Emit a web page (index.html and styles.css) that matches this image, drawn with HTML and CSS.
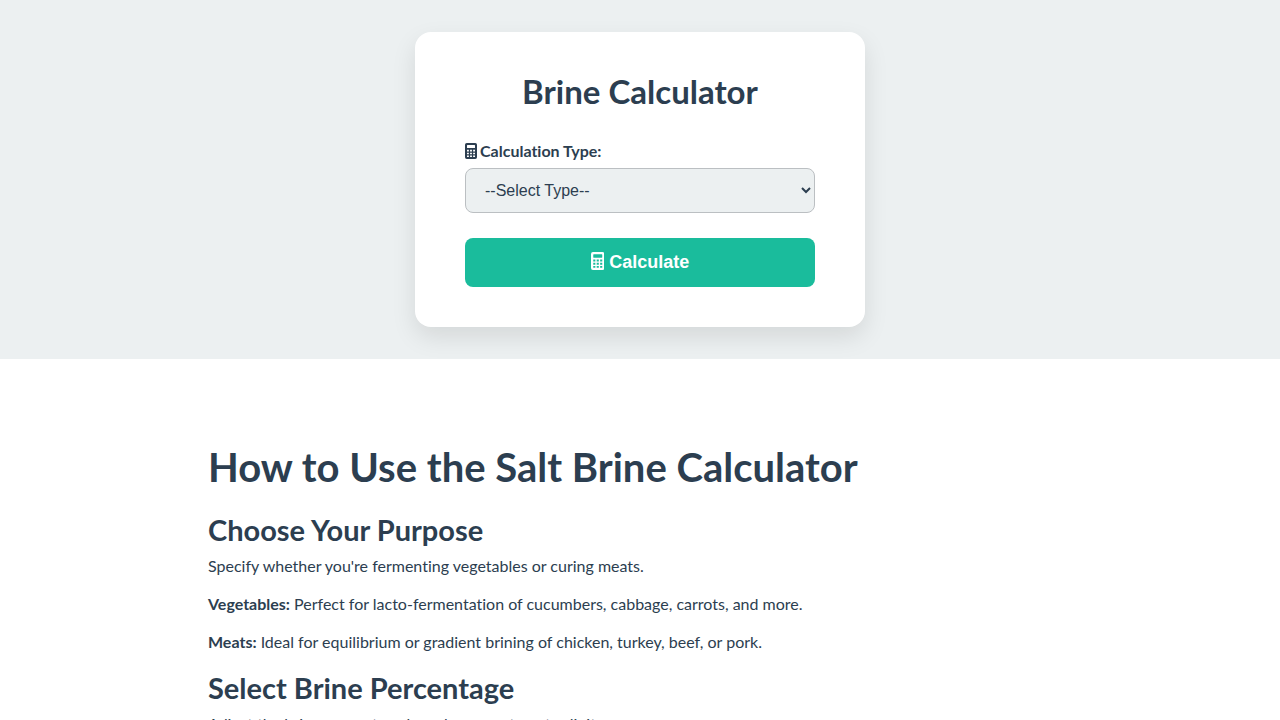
FILE: index.html
```
<!DOCTYPE html>
<html lang="en">
<head>
    <meta charset="UTF-8">
    <meta name="viewport" content="width=device-width, initial-scale=1.0">
    <title>Brine Calculator</title>
    <link rel="stylesheet" href="styles.css">
</head>
<body>
    <section class="calculator-section">
        <div class="calculator">
            <h2>Brine Calculator</h2>
            <form id="brineForm">
                <div class="form-group">
                    <label for="calcType"><svg class="icon" viewBox="0 0 384 512" aria-hidden="true"><path fill="currentColor" fill-rule="evenodd" d="M56 0Q0 0 0 56v400q0 56 56 56h272q56 0 56-56V56q0-56-56-56zM76 64h232q12 0 12 12v72q0 12-12 12H76q-12 0-12-12V76q0-12 12-12zM64 216h60v52H64zm98 0h60v52h-60zm98 0h60v52h-60zM64 308h60v52H64zm98 0h60v52h-60zm98 0h60v52h-60zM64 400h60v48H64zm98 0h60v48h-60zm98 0h60v48h-60z"/></svg>Calculation Type:</label>
                    <select id="calcType" name="calcType">
                        <option value="">--Select Type--</option>
                        <option value="vegetables">Vegetables</option>
                        <option value="meats">Meats</option>
                    </select>
                </div>
                <button type="button" class="btn">
                    <svg class="icon" viewBox="0 0 384 512" aria-hidden="true"><path fill="currentColor" fill-rule="evenodd" d="M56 0Q0 0 0 56v400q0 56 56 56h272q56 0 56-56V56q0-56-56-56zM76 64h232q12 0 12 12v72q0 12-12 12H76q-12 0-12-12V76q0-12 12-12zM64 216h60v52H64zm98 0h60v52h-60zm98 0h60v52h-60zM64 308h60v52H64zm98 0h60v52h-60zm98 0h60v52h-60zM64 400h60v48H64zm98 0h60v48h-60zm98 0h60v48h-60z"/></svg>
                    Calculate
                </button>
            </form>
        </div>
    </section>

    <main class="content">
        <h1>How to Use the Salt Brine Calculator</h1>

        <h2>Choose Your Purpose</h2>
        <p>Specify whether you're fermenting vegetables or curing meats.</p>
        <p><strong>Vegetables:</strong> Perfect for lacto-fermentation of cucumbers, cabbage, carrots, and more.</p>
        <p><strong>Meats:</strong> Ideal for equilibrium or gradient brining of chicken, turkey, beef, or pork.</p>

        <h2>Select Brine Percentage</h2>
        <p>Adjust the brine percentage based on your target salinity.</p>
    </main>
</body>
</html>
```
FILE: styles.css
```
* {
    box-sizing: border-box;
}

body {
    margin: 0;
    font-family: Lato, sans-serif;
    font-size: 16px;
    line-height: 24px;
    font-variant-ligatures: none;
    color: #2c3e50;
    background-color: #ffffff;
}

h1,
h2,
p {
    margin: 0;
}

/* Calculator */
.calculator-section {
    display: flex;
    justify-content: center;
    padding: 32px 16px;
    background-color: #ecf0f1;
}

.calculator {
    width: 100%;
    max-width: 450px;
    padding: 40px 50px;
    border-radius: 16px;
    background-color: #ffffff;
    box-shadow: 0 10px 25px rgba(0, 0, 0, 0.1);
}

.calculator h2 {
    margin-bottom: 29px;
    font-size: 33px;
    line-height: 38px;
    text-align: center;
}

.form-group {
    margin-bottom: 25px;
}

.form-group label {
    display: block;
    margin-bottom: 5px;
    font-weight: 700;
}

.icon {
    display: inline-block;
    height: 1em;
    vertical-align: -2px;
}

label .icon {
    margin-right: 3px;
}

.form-group select {
    display: block;
    width: 100%;
    height: 45px;
    padding: 0 15px;
    border: 1px solid #bbbfc2;
    border-radius: 8px;
    font-family: "Liberation Sans", Arial, sans-serif;
    font-size: 16px;
    color: #2c3e50;
    background-color: #ecf0f1;
}

.btn {
    width: 100%;
    height: 49px;
    border: none;
    border-radius: 8px;
    font-family: "Liberation Sans", Arial, sans-serif;
    font-size: 18px;
    font-weight: 700;
    color: #ffffff;
    background-color: #1abc9c;
    cursor: pointer;
}

/* Instructions */
.content {
    max-width: 896px;
    margin: 0 auto;
    padding: 84px 16px;
}

.content h1 {
    margin-bottom: 21px;
    font-size: 40px;
    line-height: 48px;
}

.content h2 {
    margin-top: 16px;
    margin-bottom: 6px;
    font-size: 29px;
    line-height: 36px;
}

.content h1 + h2 {
    margin-top: 0;
}

.content p {
    margin-bottom: 14px;
}
```
